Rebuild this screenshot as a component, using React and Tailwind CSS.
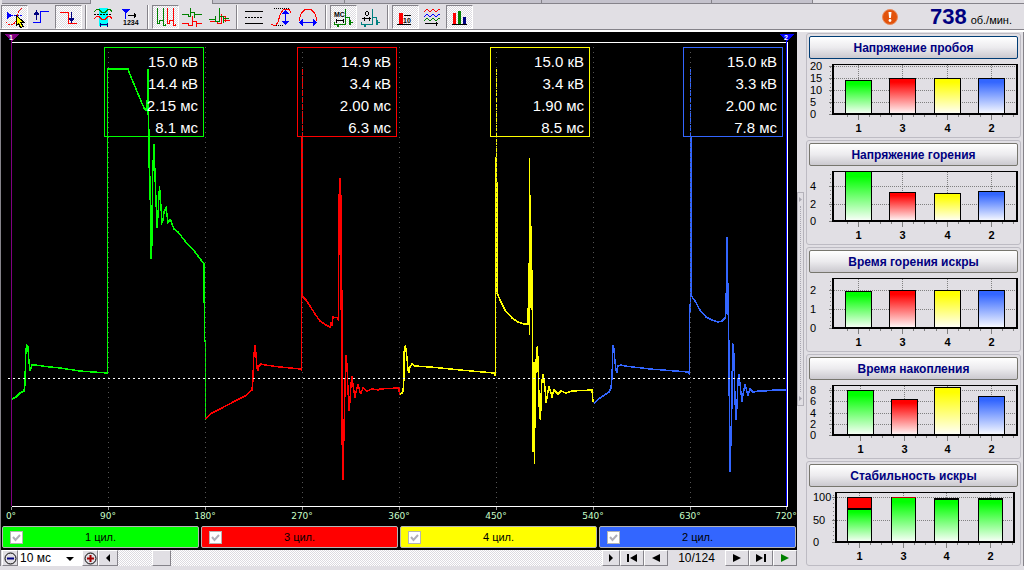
import React, { useState } from "react";
import clsx from "clsx";

// Raised button edge shared by the player bar
const RAISED =
  "flex items-center justify-center bg-[#e1dfe4] border border-t-white border-l-white border-r-[#85838a] border-b-[#85838a]";

const CHECKER =
  "bg-[repeating-conic-gradient(#ffffff_0_25%,#dcdae0_0_50%)] bg-[length:2px_2px]";

/* ---------- Toolbar icons ---------- */

const TOOL_GROUPS = [
  [
    {
      label: "Выбор сигнала",
      on: true,
      icon: (
        <>
          <path d="M6 7L11 10.500L6 14z" fill="#0000ff" />
          <path d="M10 10.500h11" stroke="#0000ff" strokeDasharray="2 1" />
          <path d="M5 17l2 2.500h5l3-3 1-6 2-5 3-2" stroke="#ff0000" strokeDasharray="2 1" />
          <path d="M15.500 10.500v10l2-2 2 4 2.500-1-2-4h3z" fill="#ffff00" stroke="#000" />
        </>
      ),
    },
    {
      label: "Передний фронт",
      icon: (
        <>
          <path d="M5 17.500h7.500v-11h8.500" stroke="#0000ff" />
          <path d="M8.500 15V8" stroke="#000080" />
          <path d="M8.500 5l3 5h-6z" fill="#000080" />
        </>
      ),
    },
    {
      label: "Задний фронт",
      on: true,
      icon: (
        <>
          <path d="M5 7.500h8.500v11h8.500" stroke="#ff0000" />
          <path d="M16.500 7v7" stroke="#000080" />
          <path d="M16.500 18l-3-5h6z" fill="#000080" />
        </>
      ),
    },
  ],
  [
    {
      label: "Огибающая",
      icon: (
        <>
          <path d="M9 3h9v18h-9z" fill="#00ffff" />
          <path d="M4 6.500l3-2h2l3 3h3l3-3h2l2 2" stroke="#008000" />
          <path d="M4 9.500h18" stroke="#000" strokeDasharray="2 1" />
          <path d="M4 13.500l3-2h2l3 3h3l3-3h2l2 2" stroke="#ff0000" />
          <path d="M10 19.500h8M10.500 17.500v4M17.500 17.500v4" stroke="#000080" />
        </>
      ),
    },
    {
      label: "Нумерация",
      icon: (
        <>
          <path d="M5 4h8l-4 5z" fill="#0000ff" />
          <path d="M8.500 8v6" stroke="#0000ff" />
          <path d="M11 10.500h8M17.500 8v5M18.500 9v3" stroke="#000" />
          <text x="6" y="20" className="fill-black font-bold text-[7px]">1234</text>
        </>
      ),
    },
  ],
  [
    {
      label: "Парад",
      on: true,
      icon: (
        <>
          <path d="M5.500 3v15.500h2M7.500 19v-4M7.500 15.500h4M11.500 3v18M11.500 20.500h2v-2" stroke="#008000" />
          <path d="M15.500 3v15.500h2M17.500 19v-4M17.500 15.500h4M21.500 3v18M21.500 20.500h2v-2" stroke="#ff0000" />
        </>
      ),
    },
    {
      label: "Растр",
      icon: (
        <>
          <path d="M3 9.500h6v2h2.500M11.500 3v9M11.500 7.500h4v5M15.500 9.500h7" stroke="#008000" />
          <path d="M3 18.500h6v2h4.500M13.500 11v10M13.500 16.500h4v5M17.500 18.500h5" stroke="#ff0000" />
        </>
      ),
    },
    {
      label: "Наложение",
      icon: (
        <>
          <path d="M4 16.500h7v2h4.500M15.500 9v10M15.500 11.500h4v5M17.500 15.500h6" stroke="#ff0000" />
          <path d="M3 14.500h6v2h4.500M9.500 11v6M13.500 3v14M13.500 11.500h4v6M17.500 13.500h5" stroke="#008000" />
        </>
      ),
    },
  ],
  [
    {
      label: "Уровни",
      icon: (
        <>
          <path d="M4 6.500h18M4 18.500h18" stroke="#000" />
          <path d="M4 12.500h18" stroke="#000" strokeDasharray="2 1" />
        </>
      ),
    },
    {
      label: "Амплитуда",
      icon: (
        <>
          <path d="M6 3.500h15M6 20.500h10" stroke="#000" strokeDasharray="1 1" />
          <path d="M3 19l2 1h3l2-3 2-7 3-5 2-1h4l2 4" stroke="#ff0000" />
          <path d="M17.500 7v11" stroke="#0000ff" />
          <path d="M17.500 5l4 4h-8zM17.500 20l4-4h-8z" fill="#0000ff" />
        </>
      ),
    },
    {
      label: "Период",
      icon: (
        <>
          <path d="M4.500 16v-3l2-5 4-4h5l4 4 2 5v3" stroke="#ff0000" />
          <path d="M6 17.500h14" stroke="#0000ff" />
          <path d="M4 17.500l4-4v8zM22 17.500l-4-4v8z" fill="#0000ff" />
        </>
      ),
    },
  ],
  [
    {
      label: "Шкала времени",
      on: true,
      icon: (
        <>
          <path d="M4.500 17v2.500h3v2h1v-2h7M15.500 4v16M15.500 12.500h4v7M19 17.500h4M20.500 15v5" stroke="#008000" />
          <text x="4" y="12" className="fill-black font-bold text-[7px]">МС</text>
          <path d="M6 15.500h8M6.500 13.500v4M13.500 13.500v4" stroke="#000" />
        </>
      ),
    },
    {
      label: "Шкала углов",
      icon: (
        <>
          <path d="M4.500 17v2.500h3v2h1v-2h7M15.500 4v16M15.500 12.500h4v7M19 17.500h4M20.500 15v5" stroke="#008080" />
          <path d="M8.500 7v3M11.500 7v3M9 6.500h2M9 10.500h2" stroke="#000" />
          <path d="M5 13.500h9M7.500 11.500v4M12.500 11.500v4" stroke="#000" />
        </>
      ),
    },
  ],
  [
    {
      label: "Усреднение",
      on: true,
      icon: (
        <>
          <path d="M7 8h4v11h-4z" fill="#ff0000" />
          <path d="M12 10.500h7M5 19.500h14" stroke="#000" />
          <text x="11" y="18" className="fill-black font-bold text-[7px]">10</text>
        </>
      ),
    },
    {
      label: "История",
      icon: (
        <>
          <path d="M5 7l3-3 3 3 3-3 3 3 3-3 1 1" stroke="#ff0000" />
          <path d="M5 12l3-3 3 3 3-3 3 3 3-3 1 1" stroke="#0000ff" />
          <path d="M5 16l3-3 3 3 3-3 3 3 3-3 1 1" stroke="#008000" />
          <path d="M6 18.500h13M17.500 16.500v4" stroke="#000" />
        </>
      ),
    },
    {
      label: "Гистограммы",
      on: true,
      icon: (
        <>
          <path d="M7 8h3v11h-3z" fill="#ff0000" />
          <path d="M12 6h3v13h-3z" fill="#008000" />
          <path d="M17 12h3v7h-3z" fill="#000080" />
          <path d="M6 19.500h15" stroke="#000" />
        </>
      ),
    },
  ],
];

function ToolButton({ tool }) {
  const [on, setOn] = useState(!!tool.on);

  return (
    <button
      aria-label={tool.label}
      aria-pressed={on}
      onClick={() => setOn(!on)}
      className={clsx(
        "w-[27px] h-6 border",
        on ? `border-t-[#85838a] border-l-[#85838a] border-r-white border-b-white ${CHECKER}` : "border-transparent"
      )}
    >
      <svg viewBox="1 1 25 22" className="w-full h-full" fill="none" shapeRendering="crispEdges">
        {tool.icon}
      </svg>
    </button>
  );
}

function TabStrip() {
  return (
    <div className="flex h-1 pl-[2px]">
      <div className="w-[88px] bg-[#c4c2cc] border-b border-[#85838a]" />
      <div className="w-[123px] border-x border-[#85838a]" />
      <div className="w-[132px] bg-[#c4c2cc] border-b border-r border-[#85838a]" />
      <div className="w-[197px] bg-[#c4c2cc] border-b border-r border-[#85838a]" />
      <div className="w-[170px] bg-[#c4c2cc] border-b border-r border-[#85838a]" />
      <div className="w-[101px] bg-[#c4c2cc] border-b border-r border-[#85838a]" />
      <div className="flex-1 border-b border-[#85838a]" />
    </div>
  );
}

function Toolbar() {
  return (
    <header className="flex items-center pl-px pt-px border-b border-[#85838a]">
      {TOOL_GROUPS.map((group, i) => (
        <React.Fragment key={i}>
          {i > 0 && <div className="w-[2px] h-6 mx-[3px] border-l border-[#85838a] border-r border-r-white" />}
          {group.map((tool) => (
            <ToolButton key={tool.label} tool={tool} />
          ))}
        </React.Fragment>
      ))}
      <div className="ml-auto flex items-baseline pr-3 h-6">
        <svg viewBox="0 0 16 16" className="w-4 h-4 mr-8 self-center">
          <circle cx="8" cy="8" r="7.500" fill="#e2530c" stroke="#e98a5c" />
          <path d="M6.500 3h3l-.6 6h-1.800z" fill="#fff" />
          <circle cx="8" cy="11.500" r="1.400" fill="#fff" />
        </svg>
        <span className="text-[22px] leading-6 font-bold text-[#000080] mr-1">738</span>
        <span className="text-[11px] leading-4">об./мин.</span>
      </div>
    </header>
  );
}

/* ---------- Oscilloscope ---------- */

const CYLINDERS = [
  {
    name: "1 цил.",
    color: "#00ff00",
    bg: "bg-[#00ff00]",
    box: 105,
    values: ["15.0 кВ", "14.4 кВ", "2.15 мс", "8.1 мс"],
    trace:
      "12,399 16,397 20,393 24,391 25,384 25.5,358 26.5,345 28,347 28.5,356 29.5,366 30,371 31,368 32,365 35,365 50,367 60,368 80,371 107,373 107.5,374 107.5,69 128,69 131,77 136,89 141,101 144,108 146,110 147,110 148,69 148,108 149,135 149.5,200 150.5,176 150.5,258 151.5,258 152,235 152.5,177 154,144 155,176 156,200 157,228 158,215 159.5,186 160.5,200 162,222 163,220 164,212 166,208 168,222 170,220 171,221 174,229 178,232 185,241 195,252 204,264 204.5,340 205.5,342 205.5,420",
  },
  {
    name: "3 цил.",
    color: "#ff0000",
    bg: "bg-[#ff0000]",
    box: 298,
    spike: "M302.5 69V138",
    values: ["14.9 кВ", "3.4 кВ", "2.00 мс", "6.3 мс"],
    trace:
      "205.5,419 212,413 222,408 235,401 245,396 252,390 253,380 253.5,360 255,345 256,354 257,368 258,370 259,366 261,364 265,365 280,367 301,369 301.5,371 301.5,138 302.5,138 302.5,297 303,297 306,300 310,306 315,314 320,321 326,325 330,327 331,322 332,326 333,317 338,318 338.5,321 339,200 340,178 341,200 341,310 342,290 342,445 342.5,386 343,480 344,430 345,387 346,355 347,366 348,390 349,411 350,400 351,384 352,376 353,385 355,398 356,392 358,384 360,392 361,393 363,388 367,391 372,389 378,390 380,389 397,388 399,388 399.5,395",
  },
  {
    name: "4 цил.",
    color: "#ffff00",
    bg: "bg-[#ffff00]",
    box: 491,
    spike: "M496.5 69V158",
    values: ["15.0 кВ", "3.4 кВ", "1.90 мс", "8.5 мс"],
    trace:
      "400,394 402,393 403,391 404,378 404,352 405.5,345 406,350 407,358 408,370 409,372 410,367 412,364 415,366 430,367 460,370 494,373 495.5,376 495.5,158 496.5,158 496.5,294 497,182 497.5,294 500,300 505,310 512,318 518,322 524,324 528,324 529,263 529.5,335 529.5,158 530,230 531,308 531.5,226 532,310 532.5,272 533,452 534,362 534.5,464 535,395 536.5,352 537.5,346 538.5,380 539.5,415 540.5,420 541.5,385 543,374 545,388 546,403 548,392 549,386 551,393 552,397 554,390 556,392 558,394 561,391 566,393 572,391 592,390 593,402",
  },
  {
    name: "2 цил.",
    color: "#3366ff",
    bg: "bg-[#3366ff]",
    box: 684,
    spike: "M690.5 69V138",
    values: ["15.0 кВ", "3.3 кВ", "2.00 мс", "7.8 мс"],
    trace:
      "594,403 600,398 609,392 611,388 612,377 613,345 614,349 615,362 616,370 617,372 618,366 621,365 625,366 650,369 688,372 689.5,374 689.5,317 690.5,300 690.5,138 691.5,138 691.5,296 695,301 700,310 706,317 712,320 718,322 722,321 725,318 726,313 727,237 728,315 728.5,283 729,396 729.5,378 730,472 731,438 732,400 732.5,344 733.5,345 734,360 735,400 736,420 737,405 738,380 739,374 740,384 742,402 743,394 745,385 748,395 750,389 753,392 759,391 764,391 775,390 786,390",
  },
];

const GRID = [108, 205, 302, 399, 496, 593, 690];
const ANGLES = [0, 90, 180, 270, 360, 450, 540, 630, 720];

function Scope({ visible }) {
  return (
    <svg viewBox="1 32 796 493" className="block w-full h-auto bg-black" fill="none" shapeRendering="crispEdges">
      <path d="M12 42.500H786M12 506.500H788" stroke="#fff" />

      {/* Traces of the cylinders */}
      {CYLINDERS.map(
        (c, i) =>
          visible[i] && (
            <g key={c.name} stroke={c.color}>
              <polyline points={c.trace} strokeWidth="1.5" />
              {c.spike && <path d={c.spike} strokeDasharray="6 1" />}
            </g>
          )
      )}

      {GRID.map((x) => (
        <path key={x} d={`M${x + 0.5} 47V506`} stroke="#555" strokeDasharray="1 4" />
      ))}
      <path d="M8 378.500H788" stroke="#fff" strokeDasharray="2 3" />

      {/* Measured values */}
      {CYLINDERS.map((c) => (
        <g key={c.name}>
          <rect x={c.box - 0.5} y="47.500" width="99" height="89" rx="1" stroke={c.color} />
          {c.values.map((v, i) => (
            <text key={i} x={c.box + 93} y={67 + i * 22} textAnchor="end" className="fill-white text-[15px]">
              {v}
            </text>
          ))}
        </g>
      ))}

      {/* Cursors */}
      <path d="M11.500 34V506" stroke="#800080" />
      <path d="M4 34h15l-7 7z" fill="#800080" />
      <text x="11" y="40" textAnchor="middle" className="fill-white font-bold text-[7px]">1</text>
      <path d="M786.500 34V506" stroke="#0000ff" />
      <path d="M787.500 42V506" stroke="#fff" />
      <path d="M779 34h15l-7 7z" fill="#0000ff" />
      <text x="786" y="40" textAnchor="middle" className="fill-white font-bold text-[7px]">2</text>

      {/* Crankshaft angle scale */}
      {ANGLES.map((a) => (
        <g key={a}>
          <path d={`M${11.5 + Math.round(a * 1.077)} 507v3`} stroke="#999" />
          <text
            x={11 + Math.round(a * 1.077)}
            y="519"
            textAnchor="middle"
            className="fill-[#c8ffc8] font-['DejaVu_Sans',sans-serif] text-[9px]"
          >
            {a}°
          </text>
        </g>
      ))}
    </svg>
  );
}

function Legend({ visible, onToggle }) {
  return (
    <div className="grid grid-cols-4 gap-[2px] bg-black px-px pt-px pb-[2px]">
      {CYLINDERS.map((c, i) => (
        <label
          key={c.name}
          className={clsx("relative flex items-center justify-center h-[22px] border border-[#b4b4b4] rounded-[2px] text-[11px]", c.bg)}
        >
          <span className="absolute left-[7px] grid place-items-center">
            <input
              type="checkbox"
              checked={visible[i]}
              onChange={() => onToggle(i)}
              className="col-start-1 row-start-1 appearance-none w-[13px] h-[13px] bg-white border border-[#b4b4b4]"
            />
            {visible[i] && (
              <svg viewBox="0 0 9 9" className="col-start-1 row-start-1 w-[9px] h-[9px] pointer-events-none">
                <path d="M1 4l2.500 3L8 2" fill="none" stroke="#b0aeb8" strokeWidth="2" />
              </svg>
            )}
          </span>
          {c.name}
        </label>
      ))}
    </div>
  );
}

const GLYPHS = {
  first: "M1 1h2v8H1zM11 1v8L4 5z",
  prev: "M10 1v8L2 5z",
  next: "M2 1v8l8-4z",
  last: "M9 1h2v8H9zM1 1v8l7-4z",
  play: "M2 1v8l8-4z",
};

function NavButton({ glyph, label, onClick, className }) {
  return (
    <button aria-label={label} onClick={onClick} className={clsx(RAISED, "w-6 h-4 shrink-0")}>
      <svg viewBox="0 0 12 10" className={clsx("w-3 h-[10px]", className)} fill="currentColor">
        <path d={GLYPHS[glyph]} />
      </svg>
    </button>
  );
}

const SCALES = ["5 мс", "10 мс", "20 мс", "50 мс"];

function PlayerBar() {
  const [frame, setFrame] = useState(10);
  const [scale, setScale] = useState(1);
  const go = (n) => setFrame(Math.min(124, Math.max(1, n)));

  return (
    <div className="flex items-center h-4 pl-px">
      <button aria-label="Мельче" onClick={() => setScale(Math.max(0, scale - 1))} className={clsx(RAISED, "w-4 h-4")}>
        <svg viewBox="0 0 13 13" className="w-[13px] h-[13px] shrink-0" fill="none">
          <circle cx="6.500" cy="6.500" r="5.500" stroke="#000" />
          <path d="M3 6.500h7" stroke="#000080" strokeWidth="2" />
        </svg>
      </button>
      <div className="relative w-16">
        <select
          aria-label="Масштаб"
          value={scale}
          onChange={(e) => setScale(Number(e.target.value))}
          className="block appearance-none w-full h-4 bg-white pl-[2px] text-[12px] leading-4"
        >
          {SCALES.map((s, i) => (
            <option key={s} value={i}>{s}</option>
          ))}
        </select>
        <svg viewBox="0 0 8 4" className="absolute right-2 top-[7px] w-2 h-1 pointer-events-none">
          <path d="M0 0h8L4 4z" />
        </svg>
      </div>
      <button aria-label="Крупнее" onClick={() => setScale(Math.min(3, scale + 1))} className={clsx(RAISED, "w-4 h-4")}>
        <svg viewBox="0 0 13 13" className="w-[13px] h-[13px] shrink-0" fill="none">
          <circle cx="6.500" cy="6.500" r="5.500" stroke="#000" />
          <path d="M3 6.500h7M6.500 3v7" stroke="#a00000" strokeWidth="2" />
        </svg>
      </button>

      <button aria-label="Назад" onClick={() => go(frame - 1)} className={clsx(RAISED, "w-5 h-4")}>
        <svg viewBox="0 0 4 8" className="w-1 h-2"><path d="M4 0v8L0 4z" /></svg>
      </button>
      <input
        type="range"
        aria-label="Кадр"
        min="1"
        max="124"
        value={frame}
        onChange={(e) => go(Number(e.target.value))}
        className={clsx(
          "appearance-none flex-1 min-w-0 h-4 [&::-webkit-slider-thumb]:appearance-none [&::-webkit-slider-thumb]:w-[19px] [&::-webkit-slider-thumb]:h-4 [&::-webkit-slider-thumb]:bg-[#e1dfe4] [&::-webkit-slider-thumb]:border [&::-webkit-slider-thumb]:border-t-white [&::-webkit-slider-thumb]:border-l-white [&::-webkit-slider-thumb]:border-r-[#85838a] [&::-webkit-slider-thumb]:border-b-[#85838a]",
          CHECKER
        )}
      />
      <button aria-label="Вперёд" onClick={() => go(frame + 1)} className={clsx(RAISED, "w-[18px] h-4")}>
        <svg viewBox="0 0 4 8" className="w-1 h-2"><path d="M0 0v8l4-4z" /></svg>
      </button>

      <NavButton glyph="first" label="Первый кадр" onClick={() => go(1)} />
      <NavButton glyph="prev" label="Предыдущий кадр" onClick={() => go(frame - 1)} />
      <output className="w-[57px] text-center text-[12px] leading-4">{frame}/124</output>
      <NavButton glyph="next" label="Следующий кадр" onClick={() => go(frame + 1)} />
      <NavButton glyph="last" label="Последний кадр" onClick={() => go(124)} />
      <NavButton glyph="play" label="Пуск" className="text-[#008000]" />
    </div>
  );
}

/* ---------- Histograms ---------- */

const FILLS = ["#00ff00", "#ff0000", "#ffff00", "#3366ff"];
const NUMBERS = [1, 3, 4, 2];
const CENTERS = [51.5, 95.5, 140.5, 184.5];
const CENTERS_SHIFTED = [53.5, 97.5, 140.5, 184.5];

const CHARTS = [
  { title: "Напряжение пробоя", unit: 2.4, ticks: [0, 5, 10, 15, 20], values: [14, 15, 15, 15] },
  { title: "Напряжение горения", unit: 8.7, ticks: [0, 2, 4], values: [5.75, 3.3, 3.2, 3.4] },
  { title: "Время горения искры", unit: 19, ticks: [0, 1, 2], values: [1.95, 2, 2, 2] },
  { title: "Время накопления", unit: 5.6, ticks: [0, 2, 4, 6, 8], values: [8, 6.4, 8.6, 7], centers: CENTERS_SHIFTED },
  {
    title: "Стабильность искры",
    unit: 0.45,
    ticks: [0, 50, 100],
    values: [75, 99, 98, 98],
    misses: [100, 100, 0, 0],
    centers: [52.5, 96.5, 139.5, 183.5],
    barWidth: 24,
    left: 28,
    right: 207,
  },
];

function BarChart({ chart, id }) {
  const { unit, ticks, values, misses, centers = CENTERS, barWidth = 26, left = 25, right = 210 } = chart;
  const y = (v) => Math.round(55 - v * unit) + 0.5;

  return (
    <svg viewBox="0 0 213 78" className="block w-full h-auto" fill="none" shapeRendering="crispEdges">
      <defs>
        {FILLS.map((f, i) => (
          <linearGradient key={f} id={`${id}-${i}`} x1="0" y1="0" x2="0" y2="1">
            <stop offset="0" stopColor={misses ? FILLS[0] : f} />
            <stop offset="0.1" stopColor={misses ? FILLS[0] : f} />
            <stop offset="1" stopColor="#fff" />
          </linearGradient>
        ))}
      </defs>

      {/* Grid and scale */}
      {ticks.map((t) => (
        <g key={t}>
          <path d={`M${left} ${y(t)}H${right}`} stroke="#808080" strokeDasharray="1 1" />
          <path d={`M${left - 3} ${y(t)}h3`} stroke="#808080" />
          <text x={misses ? 6 : 3} y={y(t) + 3.5} className="fill-black text-[11px]">{t}</text>
        </g>
      ))}
      <path d={`M${left - 1.5} 8V55`} stroke="#808080" strokeDasharray="1 3" />

      {values.map((v, i) => (
        <g key={i}>
          <path d={`M${centers[i]} 6V55`} stroke="#808080" strokeDasharray="1 1" />
          <path d={`M${centers[i]} 56v5M${centers[i] - 11} 56v2M${centers[i] + 11} 56v2M${centers[i] + 22} 56v2`} stroke="#808080" />
          {misses && misses[i] > 0 && (
            <rect x={centers[i] - barWidth / 2} y={y(misses[i])} width={barWidth} height={y(0) - y(misses[i])} fill="#ff0000" stroke="#000" />
          )}
          <rect
            x={centers[i] - barWidth / 2}
            y={y(v)}
            width={barWidth}
            height={y(0) - y(v)}
            fill={`url(#${id}-${i})`}
            stroke="#000"
          />
          {/* Thick cap over the share of good sparks */}
          {misses && i !== 1 && (
            <path d={`M${centers[i] - barWidth / 2} ${y(v) + 0.5}h${barWidth}`} stroke="#000" strokeWidth="2" />
          )}
          {misses && i === 1 && (
            <path d={`M${centers[i] - barWidth / 2} ${y(v)}h${barWidth}`} stroke="#c00000" />
          )}
          <text x={centers[i]} y="73" textAnchor="middle" className="fill-black font-bold text-[11px]">
            {NUMBERS[i]}
          </text>
        </g>
      ))}

      <path d={`M${left} 5.500H${right}`} stroke="#000" />
      <path d={`M${left + 1} 5V55H${right}V5`} stroke="#000" strokeWidth="2" />
    </svg>
  );
}

function ChartPanel({ chart, id, active, onSelect }) {
  return (
    <section className="border border-[#bdbbc3] rounded-[3px] pt-[2px]">
      <div className="flex px-[2px]">
        <button
          onClick={onSelect}
          className={clsx(
            "flex-1 h-[23px] border rounded-[2px] bg-linear-to-b from-white via-[#ecebee] to-[#cbc9cf] text-[12px] leading-4 font-bold text-[#000080]",
            active ? "border-[#003c74]" : "border-[#77766e]"
          )}
        >
          {chart.title}
        </button>
      </div>
      <BarChart chart={chart} id={id} />
    </section>
  );
}

export default function App() {
  const [visible, setVisible] = useState([true, true, true, true]);
  const [active, setActive] = useState(0);

  const toggle = (i) => setVisible(visible.map((v, n) => (n === i ? !v : v)));

  return (
    <div className="min-h-screen bg-[#e1dfe4] text-black font-['Liberation_Sans',Arial,sans-serif]">
      <TabStrip />
      <Toolbar />
      <main className="flex border-t-2 border-white">
        <div className="flex-1 min-w-0 border-l border-[#85838a]">
          <Scope visible={visible} />
          <Legend visible={visible} onToggle={toggle} />
          <PlayerBar />
        </div>

        {/* Splitter */}
        <div className="w-[7px] my-40 py-1 flex flex-col items-center border border-[#b4b2ba]">
          <svg viewBox="0 0 3 5" className="w-[3px] h-[5px]"><path d="M0 0v5l3-2.500z" fill="#a9a7b0" /></svg>
          <div className="flex-1 my-1 border-l border-dotted border-[#a9a7b0]" />
          <svg viewBox="0 0 3 5" className="w-[3px] h-[5px]"><path d="M0 0v5l3-2.500z" fill="#a9a7b0" /></svg>
        </div>

        <aside className="w-[220px] flex flex-col gap-[2px] px-[2px] pt-px border-r border-[#85838a]">
          {CHARTS.map((chart, i) => (
            <ChartPanel
              key={chart.title}
              chart={chart}
              id={`bars${i}`}
              active={active === i}
              onSelect={() => setActive(i)}
            />
          ))}
        </aside>
      </main>
    </div>
  );
}
